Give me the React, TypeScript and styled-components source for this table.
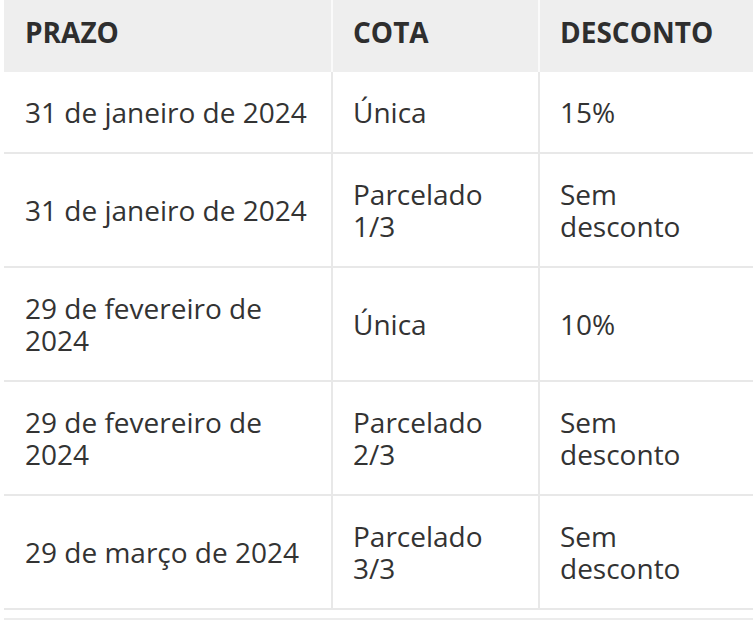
import React from "react";
import styled, { createGlobalStyle } from "styled-components";

const GlobalStyle = createGlobalStyle`
  html, body {
    margin: 0;
    padding: 0;
    background: #ffffff;
  }
  body {
    font-family: "Open Sans", "Noto Sans", sans-serif;
    color: #333333;
  }
`;

const Page = styled.div`
  padding-left: 4px;
  width: 749px;
`;

const Table = styled.table`
  width: 749px;
  table-layout: fixed;
  border-collapse: separate;
  border-spacing: 0;
  font-size: 28px;
  line-height: 32px;
`;

const HeadCell = styled.th<{ $last?: boolean }>`
  background: #eeeeee;
  text-align: left;
  font-weight: 700;
  text-transform: uppercase;
  padding: 16px 20px 24px;
  border-right: ${(p) => (p.$last ? "none" : "2px solid #fafafa")};
  color: #2e2e2e;
  &:first-child {
    padding-left: 21px;
  }
`;

const Cell = styled.td<{ $last?: boolean }>`
  padding: 24px 20px;
  vertical-align: middle;
  font-weight: 400;
  color: #333333;
  border-bottom: 2px solid #e8e8e8;
  border-right: ${(p) => (p.$last ? "none" : "2px solid #e8e8e8")};
  &:first-child {
    padding-left: 21px;
  }
`;

const FootRule = styled.div`
  margin-top: 8px;
  height: 2px;
  background: #ececec;
  width: 749px;
`;

const rows = [
  ["31 de janeiro de 2024", "Única", "15%"],
  ["31 de janeiro de 2024", "Parcelado 1/3", "Sem desconto"],
  ["29 de fevereiro de 2024", "Única", "10%"],
  ["29 de fevereiro de 2024", "Parcelado 2/3", "Sem desconto"],
  ["29 de março de 2024", "Parcelado 3/3", "Sem desconto"],
];

export default function App() {
  return (
    <>
      <GlobalStyle />
      <Page>
        <Table>
          <colgroup>
            <col style={{ width: 329 }} />
            <col style={{ width: 207 }} />
            <col style={{ width: 213 }} />
          </colgroup>
          <thead>
            <tr>
              <HeadCell>Prazo</HeadCell>
              <HeadCell>Cota</HeadCell>
              <HeadCell $last>Desconto</HeadCell>
            </tr>
          </thead>
          <tbody>
            {rows.map((r, i) => (
              <tr key={i}>
                <Cell>{r[0]}</Cell>
                <Cell>{r[1]}</Cell>
                <Cell $last>{r[2]}</Cell>
              </tr>
            ))}
          </tbody>
        </Table>
        <FootRule />
      </Page>
    </>
  );
}
